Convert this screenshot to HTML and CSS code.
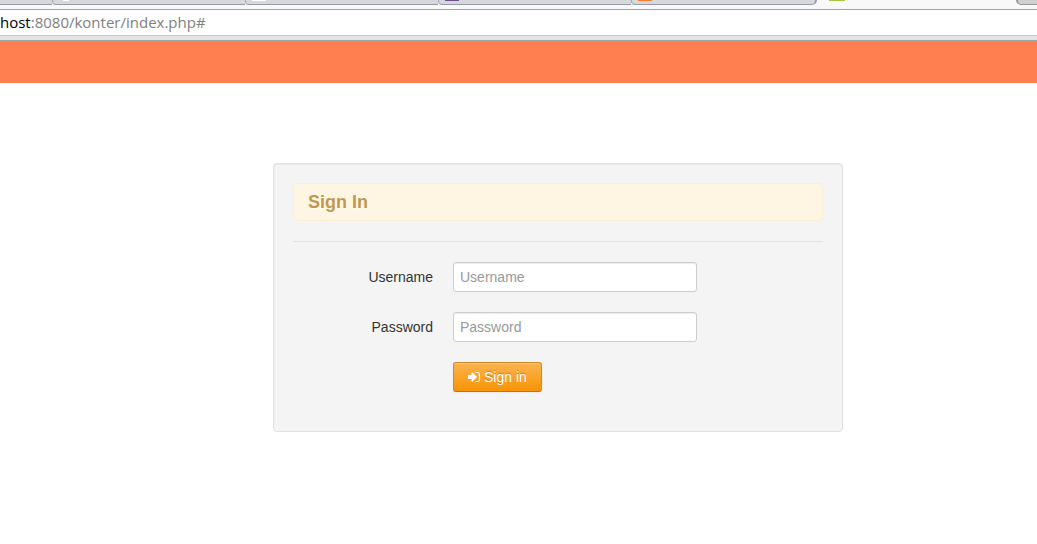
FILE: index.html
```
<!DOCTYPE html>
<html lang="en">
<head>
    <meta charset="UTF-8">
    <meta name="viewport" content="width=device-width, initial-scale=1.0">
    <title>Sign In</title>
    <link rel="stylesheet" href="styles.css">
</head>
<body>
    <div class="browser">
        <div class="tabs">
            <div class="tab tab-first"></div>
            <div class="tab"><span class="favicon favicon-round"></span></div>
            <div class="tab"><span class="favicon"></span></div>
            <div class="tab"><span class="favicon favicon-purple"></span></div>
            <div class="tab tab-last"><span class="favicon favicon-orange"></span></div>
            <div class="tab-active"><span class="favicon favicon-green"></span></div>
            <div class="tab-new"></div>
        </div>
        <div class="address"><span class="host">host</span>:8080/konter/index.php#</div>
        <div class="toolbar"></div>
    </div>

    <div class="navbar"></div>

    <div class="container">
        <div class="well">
            <h1 class="alert">Sign In</h1>
            <hr>
            <form id="login-form">
                <div class="control-group">
                    <label class="control-label" for="username">Username</label>
                    <input type="text" id="username" name="username" placeholder="Username">
                </div>
                <div class="control-group">
                    <label class="control-label" for="password">Password</label>
                    <input type="password" id="password" name="password" placeholder="Password">
                </div>
                <div class="control-group actions">
                    <button type="submit" class="btn">
                        <svg class="icon" viewBox="0 0 12 12" aria-hidden="true">
                            <path d="M0.5 4h3V2c0-.6.6-.8 1-.4l4.1 4c.3.3.3.6 0 .9l-4.1 4c-.4.4-1 .2-1-.4V8h-3C.2 8 0 7.8 0 7.5v-3c0-.3.2-.5.5-.5z" fill="#fff"/>
                            <path d="M7.5 1.5h2.2c1.1 0 1.7.6 1.7 1.7v5.6c0 1.1-.6 1.7-1.7 1.7H7.5" fill="none" stroke="#fff" stroke-width="1.1"/>
                        </svg>
                        Sign in
                    </button>
                </div>
            </form>
        </div>
    </div>
</body>
</html>
```

FILE: styles.css
```
body {
    margin: 0;
    background: #fff;
    color: #333;
    font-family: "Liberation Sans", Arial, sans-serif;
    font-size: 14px;
    line-height: 20px;
}

/* Browser bar */
.tabs {
    display: flex;
    height: 9px;
    overflow: hidden;
    background: #f9f9f9;
    border-bottom: 1px solid #a3a3a3;
}
.tab {
    box-sizing: border-box;
    width: 193px;
    height: 5px;
    background: #d5d9de;
    border-bottom: 1px solid #979ca4;
    border-left: 1px solid #a3a7ad;
    border-bottom-left-radius: 4px;
}
.tab-first {
    width: 52px;
    border-left: none;
    border-radius: 0;
}
.tab-last {
    width: 186px;
    border-right: 2px solid #979ca4;
    border-bottom-right-radius: 5px;
}
.tab-active {
    flex: 1;
    padding-left: 6px;
}
.tab-new {
    box-sizing: border-box;
    width: 21px;
    height: 5px;
    background: #d0d0d0;
    border: solid #979797;
    border-width: 0 0 1px 2px;
    border-bottom-left-radius: 5px;
}
.favicon {
    display: block;
    width: 14px;
    height: 1px;
    margin-left: 6px;
    background: #fff;
}
.favicon-round {
    width: 6px;
    margin-left: 10px;
}
.favicon-purple {
    background: #6b4f8c;
}
.favicon-orange {
    background: #ff7a2a;
}
.favicon-green {
    width: 16px;
    background: #a4c639;
}
.address {
    height: 25px;
    font-family: "Open Sans", "Noto Sans", sans-serif;
    font-size: 15px;
    line-height: 25px;
    color: #808080;
    background: #fff;
    border-bottom: 1px solid #c6c6c6;
}
.host {
    color: #000;
}
.toolbar {
    height: 4px;
    background: #e5e5e5;
    border-bottom: 1px solid #a3a3a3;
}

.navbar {
    height: 42px;
    background: #ff7f50;
}

/* Login box */
.container {
    padding: 80px 0 20px 79px;
}
.well {
    box-sizing: border-box;
    max-width: 570px;
    margin: 0 auto;
    padding: 19px;
    background: #f4f4f4;
    border: 1px solid #e1e1e1;
    border-radius: 4px;
    box-shadow: inset 0 1px 1px rgba(0,0,0,0.05);
}
.alert {
    margin: 0 0 20px;
    padding: 8px 14px;
    font-size: 18px;
    line-height: 20px;
    color: #c09853;
    background: #fef6e2;
    border: 1px solid #fbeed5;
    border-radius: 4px;
    text-shadow: 0 1px 0 rgba(255,255,255,0.5);
}
hr {
    margin: 20px 0;
    border: 0;
    border-top: 1px solid #e1e1e1;
}
.control-group {
    display: flex;
    align-items: center;
    gap: 20px;
    margin-bottom: 20px;
}
.control-label {
    width: 140px;
    text-align: right;
}
.control-group input {
    box-sizing: border-box;
    width: 244px;
    height: 30px;
    padding: 4px 6px;
    font: inherit;
    color: #555;
    background: #fff;
    border: 1px solid #ccc;
    border-radius: 3px;
    box-shadow: inset 0 1px 1px rgba(0,0,0,0.075);
}
.control-group input::placeholder {
    color: #999;
}
.actions {
    padding-left: 160px;
}
.btn {
    display: flex;
    align-items: center;
    gap: 4px;
    height: 30px;
    padding: 4px 14px;
    font: inherit;
    color: #fff;
    text-shadow: 0 -1px 0 rgba(0,0,0,0.25);
    background: linear-gradient(#fbb450, #f89406);
    border: 1px solid #d08a2c;
    border-bottom-color: #b3771f;
    border-radius: 3px;
    box-shadow: inset 0 1px 0 rgba(255,255,255,0.2), 0 1px 2px rgba(0,0,0,0.05);
    cursor: pointer;
}
.icon {
    width: 12px;
    height: 12px;
}
```
